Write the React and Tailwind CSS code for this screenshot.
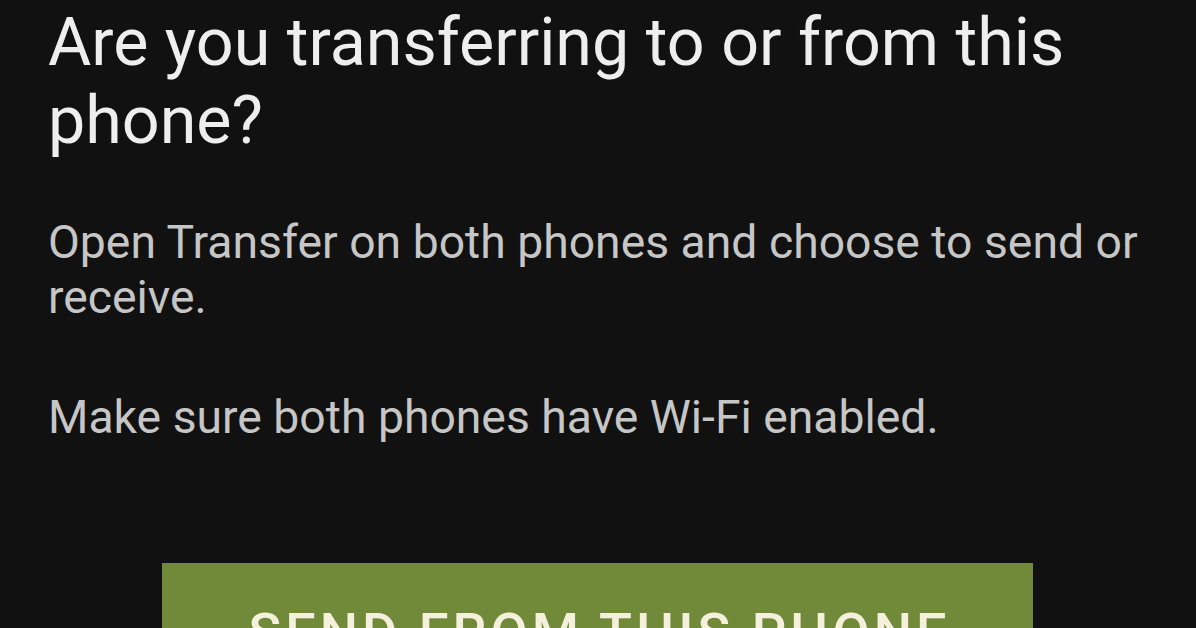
export default function App() {
  return (
    <div
      className="w-[1196px] h-[628px] overflow-hidden bg-[#111111] pl-[48px] pr-[40px] pt-[3px]"
      style={{ fontFamily: "Roboto, 'Noto Sans', sans-serif" }}
    >
      <h1 className="text-[66.4px] leading-[78px] font-normal text-[#eeeeee]">
        Are you transferring to or from this phone?
      </h1>
      <p className="mt-[56px] text-[46.3px] leading-[55px] text-[#c6c6c6]">
        Open Transfer on both phones and choose to send or receive.
      </p>
      <p className="mt-[65px] text-[46.3px] leading-[55px] text-[#c6c6c6]">
        Make sure both phones have Wi-Fi enabled.
      </p>
      <div className="mt-[118px] pl-[114px] pr-[123px]">
        <button className="w-full h-[140px] bg-[#718a3a] flex items-start justify-center pt-[40px] pl-[4px] text-[#f4f0dc] text-[54px] leading-[60px] font-medium tracking-[4px] uppercase">
          Send from this phone
        </button>
      </div>
    </div>
  );
}
